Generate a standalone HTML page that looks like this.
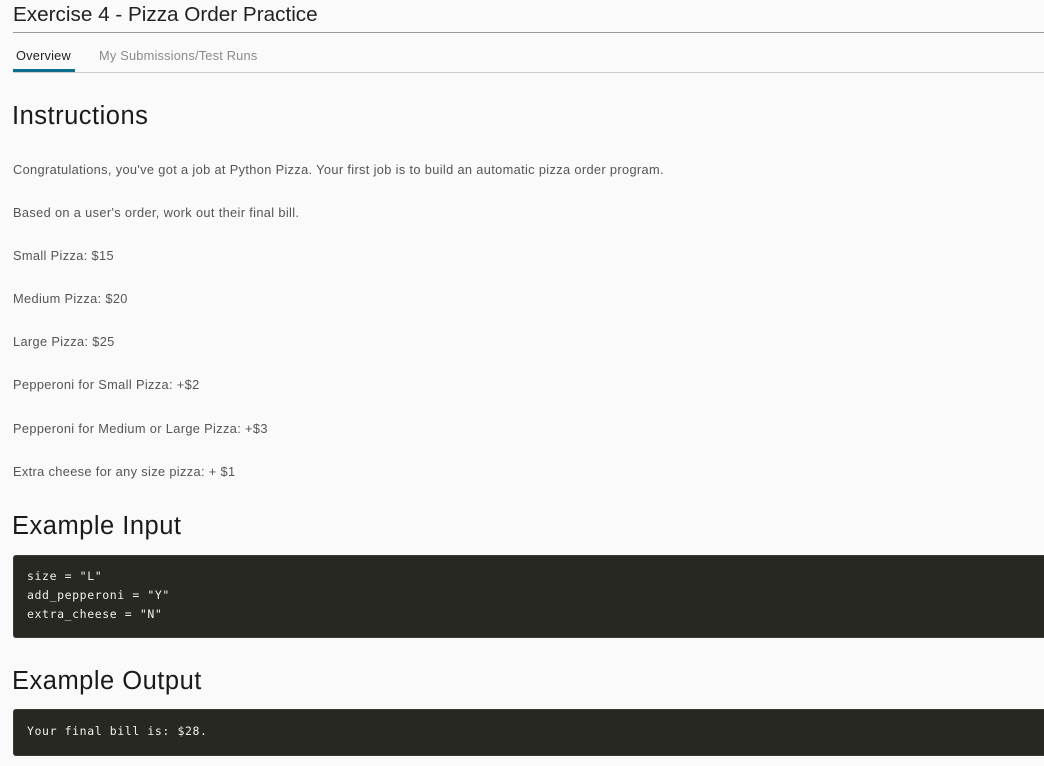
<!DOCTYPE html>
<html><head><meta charset="utf-8"><style>
body{margin:0;background:#fafafa;font-family:"Liberation Sans",sans-serif;width:1044px;height:766px;overflow:hidden;position:relative}
.a{position:absolute;white-space:nowrap}
.t{font-size:20.7px;left:13px;top:3px;color:#222}
.rule{position:absolute;left:13px;right:0;height:1px;background:#9a9a9a;top:32px}
.rule2{position:absolute;left:13px;right:0;height:1px;background:#ccc;top:72px}
.tab{font-size:12.8px;top:48px;letter-spacing:0.2px}
.ul{position:absolute;left:13px;top:69px;width:62px;height:3px;background:#0e6f8e}
.h{font-size:25.5px;left:12px;color:#1a1a1a;letter-spacing:0.5px}
.p{font-size:12.8px;left:13px;color:#555;letter-spacing:0.35px}
.code{position:absolute;left:13px;right:0;background:#272822;border-radius:3px 0 0 3px;border:1px solid #3a3a34;border-right:none}
.code pre{margin:0;font-family:"DejaVu Sans Mono",monospace;font-size:11.5px;line-height:19px;color:#f0f0ea;letter-spacing:0.6px;position:absolute;left:13px}
</style></head><body>
<div class="a t">Exercise 4 - Pizza Order Practice</div>
<div class="rule"></div>
<div class="a tab" style="left:16px;color:#222">Overview</div>
<div class="a tab" style="left:99px;color:#8a8a8a">My Submissions/Test Runs</div>
<div class="rule2"></div>
<div class="ul"></div>
<div class="a h" style="top:102px">Instructions</div>
<div class="a p" style="top:162px">Congratulations, you've got a job at Python Pizza. Your first job is to build an automatic pizza order program.</div>
<div class="a p" style="top:205px">Based on a user's order, work out their final bill.</div>
<div class="a p" style="top:248px">Small Pizza: $15</div>
<div class="a p" style="top:291px">Medium Pizza: $20</div>
<div class="a p" style="top:334px">Large Pizza: $25</div>
<div class="a p" style="top:377px">Pepperoni for Small Pizza: +$2</div>
<div class="a p" style="top:421px">Pepperoni for Medium or Large Pizza: +$3</div>
<div class="a p" style="top:464px">Extra cheese for any size pizza: + $1</div>
<div class="a h" style="top:512px">Example Input</div>
<div class="code" style="top:555px;height:81px"><pre style="top:11px">size = "L"
add_pepperoni = "Y"
extra_cheese = "N"</pre></div>
<div class="a h" style="top:667px">Example Output</div>
<div class="code" style="top:709px;height:45px"><pre style="top:12px">Your final bill is: $28.</pre></div>
</body></html>
